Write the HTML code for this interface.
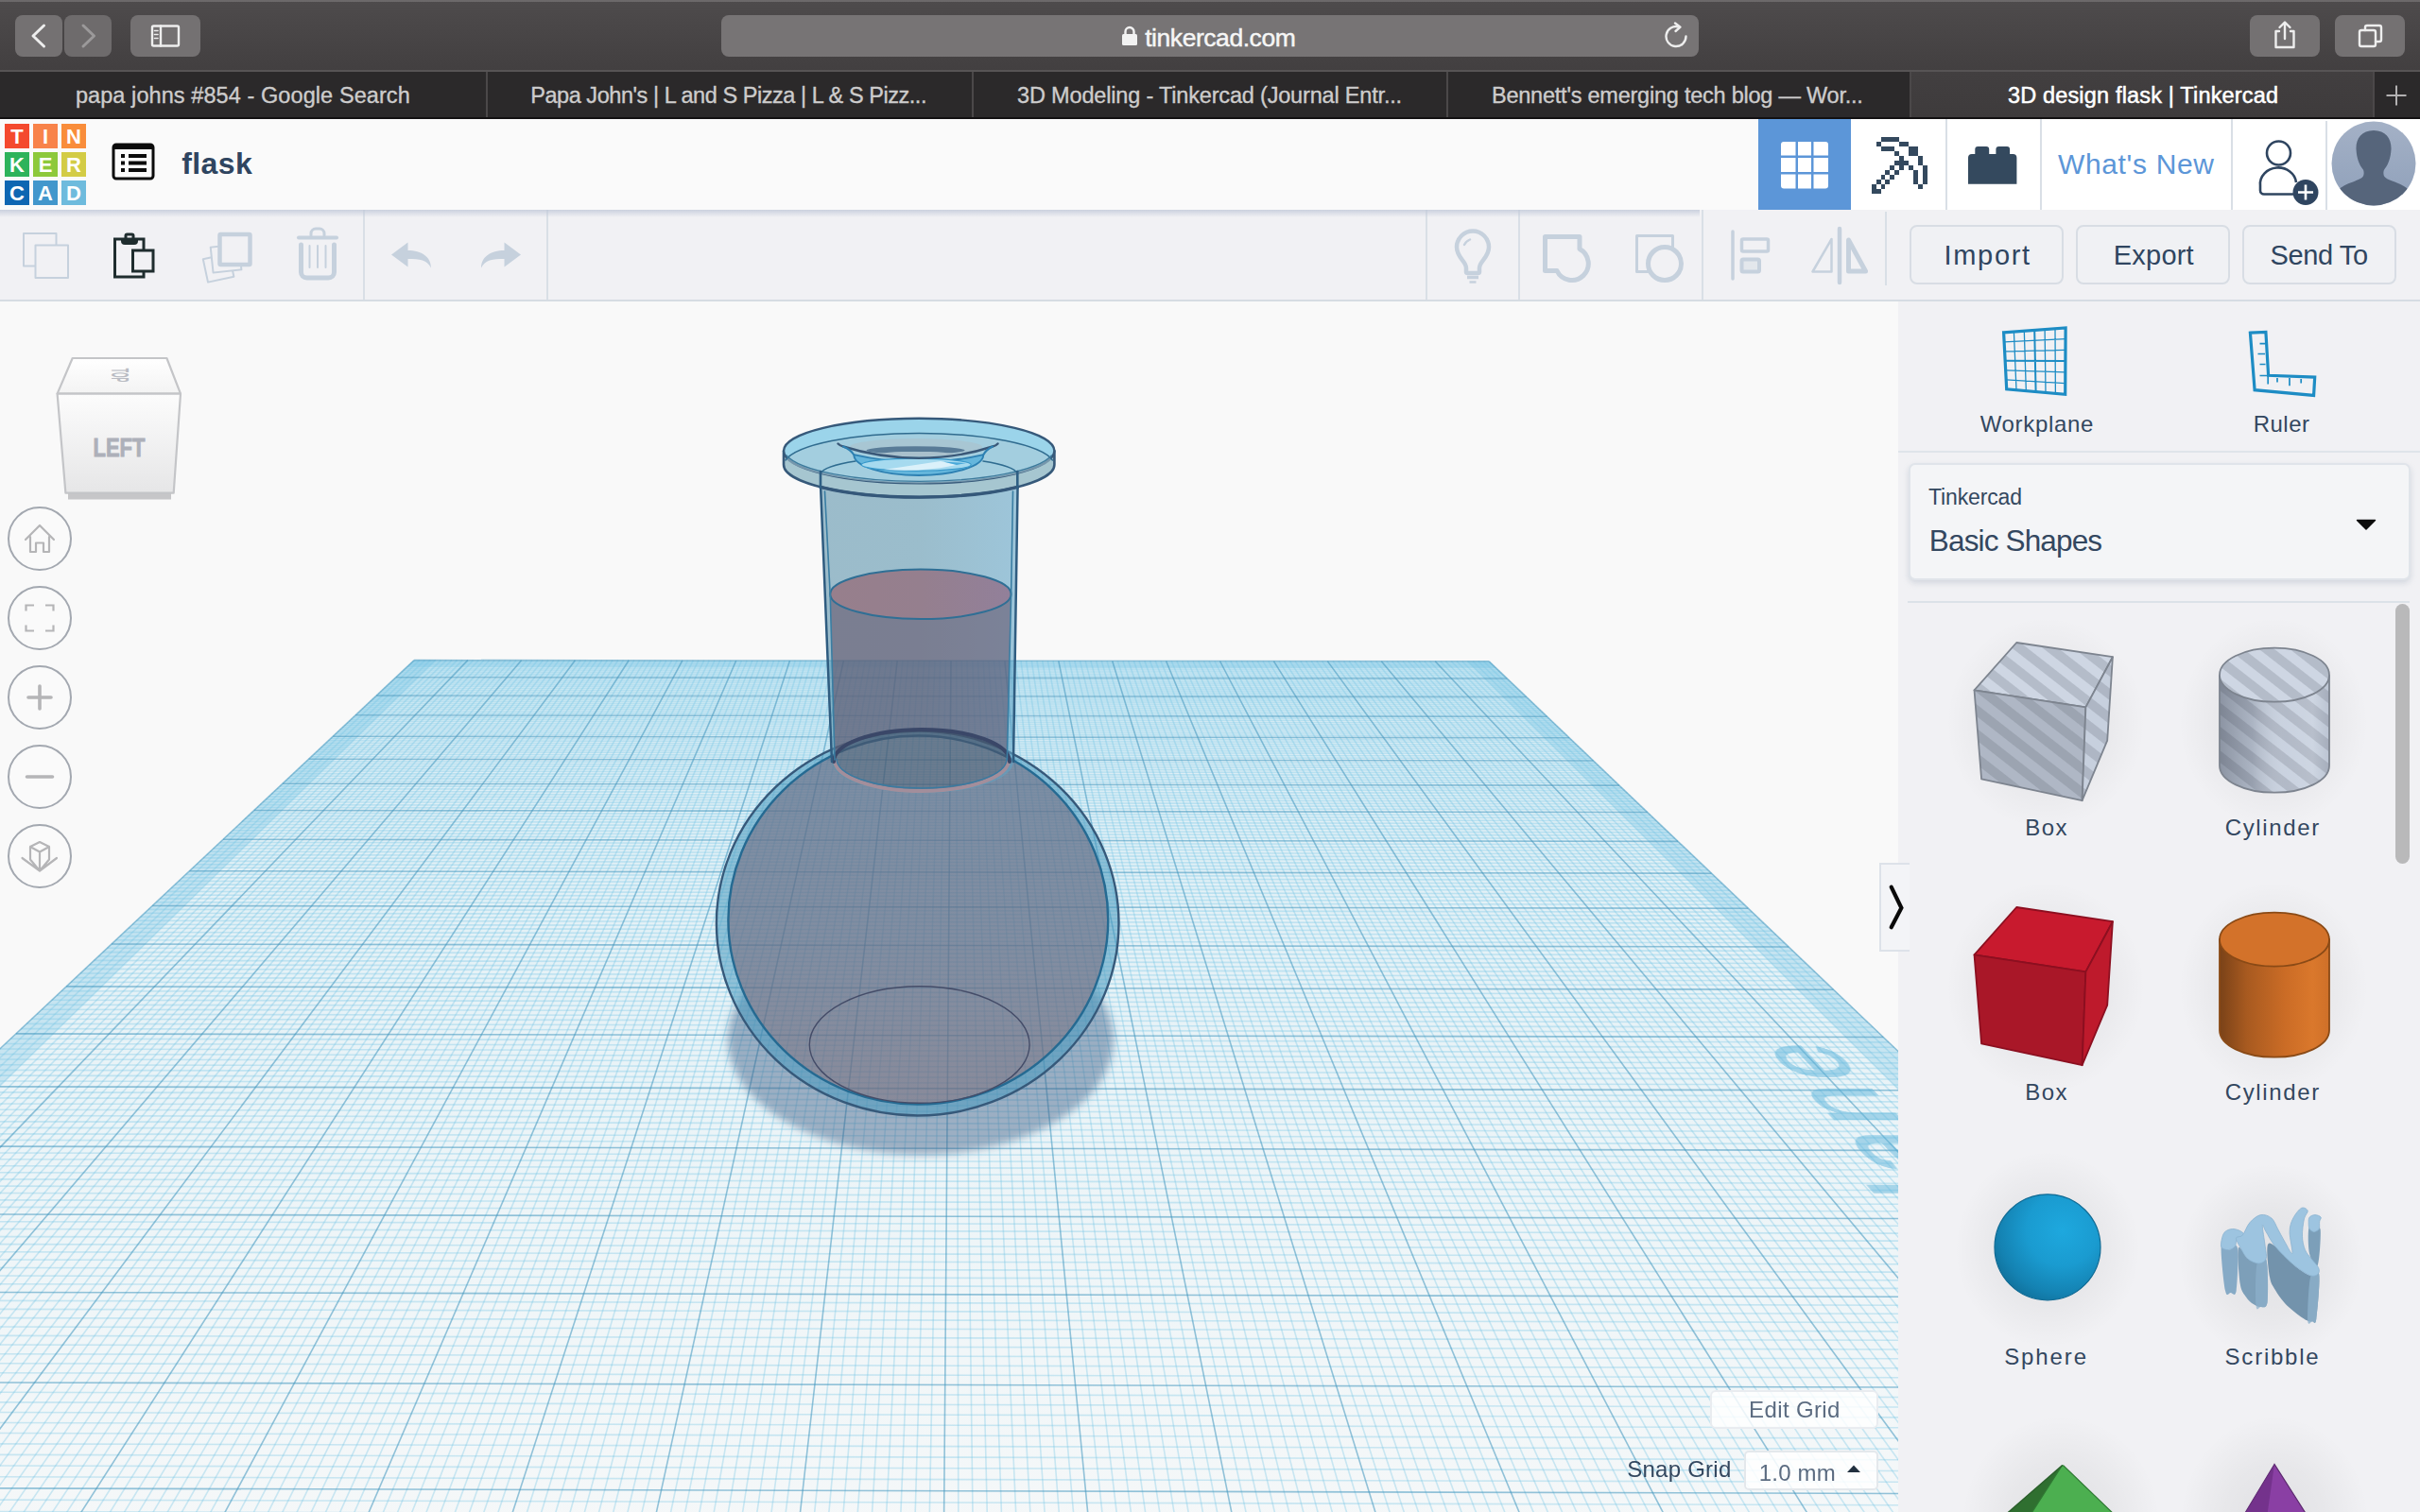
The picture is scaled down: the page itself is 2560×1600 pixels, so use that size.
<!DOCTYPE html>
<html lang="en">
<head>
<meta charset="utf-8">
<title>3D design flask | Tinkercad</title>
<style>
*{box-sizing:border-box;margin:0;padding:0}
html,body{width:2560px;height:1600px;overflow:hidden;background:#f9f9f9;font-family:"Liberation Sans",sans-serif;}
body{position:relative}
.abs{position:absolute}
.t{position:absolute;white-space:nowrap;line-height:1;}
svg{position:absolute;overflow:visible}
/* safari chrome */
#sf-top{left:0;top:0;width:2560px;height:76px;background:linear-gradient(#4e4b4c,#423f40);}
#sf-topline{left:0;top:0;width:2560px;height:2px;background:#6c696a}
.sfbtn{position:absolute;top:16px;height:44px;border-radius:8px;background:#747172;}
#sf-url{left:763px;top:16px;width:1034px;height:44px;border-radius:8px;background:#777475;}
#sf-tabs{left:0;top:74px;width:2560px;height:52px;background:#2b292a;border-top:2px solid #575455;border-bottom:2px solid #121011}
.tabsep{position:absolute;top:76px;width:2px;height:48px;background:#4b4849}
.tabt{position:absolute;top:88px;font-size:23.5px;color:#cdcccc;-webkit-text-stroke:0.35px #cdcccc;white-space:nowrap;line-height:26px;text-align:center}
/* tinkercad header */
#tk-head{left:0;top:126px;width:2560px;height:96px;background:#fafafa;}
#tk-tool{left:0;top:222px;width:2560px;height:97px;background:#f1f1f4;border-bottom:2px solid #d6dce3}
.vsep{position:absolute;width:2px;background:#d9dfe6}
.tbtn{position:absolute;top:238px;height:63px;width:163px;border:2px solid #d8dde4;border-radius:8px;background:#f0f1f4;}
.navy{color:#2f4560}
#panel{left:2008px;top:319px;width:552px;height:1281px;background:#f1f1f4}
.lbl{position:absolute;font-size:24px;color:#33475f;white-space:nowrap;line-height:1;letter-spacing:0.6px}
.navc{position:absolute;left:8px;width:68px;height:68px;border-radius:50%;border:2px solid #a3a8b0;background:#fafafa}
</style>
</head>
<body>
<!-- Safari chrome -->
<div class="abs" id="sf-top"></div>
<div class="abs" id="sf-topline"></div>
<div class="sfbtn" style="left:16px;width:50px"></div>
<div class="sfbtn" style="left:68px;width:50px;background:#6e6b6c"></div>
<div class="sfbtn" style="left:138px;width:74px"></div>
<div class="abs" id="sf-url"></div>
<div class="sfbtn" style="left:2380px;width:74px"></div>
<div class="sfbtn" style="left:2470px;width:74px"></div>
<svg width="2560" height="76" style="left:0;top:0" viewBox="0 0 2560 76" fill="none" stroke-linecap="round" stroke-linejoin="round">
  <path d="M46.5 27 L35 38 L46.5 49" stroke="#ededed" stroke-width="3"/>
  <path d="M88 27 L99.5 38 L88 49" stroke="#9b999a" stroke-width="3"/>
  <rect x="161" y="27.5" width="28" height="21" rx="1.5" stroke="#eeeeee" stroke-width="2.4"/>
  <path d="M170 27.5 V48.5" stroke="#eeeeee" stroke-width="2.4"/>
  <path d="M163.5 32.5 H167 M163.5 36.5 H167 M163.5 40.5 H167" stroke="#eeeeee" stroke-width="1.6"/>
  <!-- lock -->
  <rect x="1187" y="36" width="16" height="12" rx="1.5" fill="#f2f2f2" stroke="none"/>
  <path d="M1190.5 36 V33.5 a4.5 4.5 0 0 1 9 0 V36" stroke="#f2f2f2" stroke-width="2.4"/>
  <!-- reload -->
  <path d="M1783.5 38.5 a10.5 10.5 0 1 1 -7.5 -10" stroke="#eeeeee" stroke-width="2.4"/>
  <path d="M1772 24.5 L1777.5 28.6 L1772.5 33" stroke="#eeeeee" stroke-width="2.4"/>
  <!-- share -->
  <path d="M2411 33 H2407.5 V50 H2426.5 V33 H2423" stroke="#eeeeee" stroke-width="2.4"/>
  <path d="M2417 41 V24 M2411.5 29 L2417 23.5 L2422.5 29" stroke="#eeeeee" stroke-width="2.4"/>
  <!-- tabs -->
  <rect x="2496" y="32" width="17" height="17" rx="2" stroke="#eeeeee" stroke-width="2.4"/>
  <path d="M2502 32 V29 a2 2 0 0 1 2 -2 H2517 a2 2 0 0 1 2 2 V42 a2 2 0 0 1 -2 2 H2513" stroke="#eeeeee" stroke-width="2.4"/>
</svg>
<div class="t" id="urltxt" style="left:1211.2px;top:25px;font-size:26.5px;color:#f6f6f6;-webkit-text-stroke:0.45px #f6f6f6;line-height:30px;letter-spacing:-0.45px">tinkercad.com</div>
<div class="abs" id="sf-tabs"></div>
<div class="abs" style="left:2021px;top:76px;width:490px;height:48px;background:linear-gradient(#423f40,#3e3b3c)"></div>
<div class="tabsep" style="left:514px"></div>
<div class="tabsep" style="left:1028px"></div>
<div class="tabsep" style="left:1530px"></div>
<div class="tabsep" style="left:2020px"></div>
<div class="tabsep" style="left:2510px"></div>
<div class="tabt" id="tab1" style="left:79.9px;letter-spacing:0.08px">papa johns #854 - Google Search</div>
<div class="tabt" id="tab2" style="left:561.2px;letter-spacing:-0.45px">Papa John's | L and S Pizza | L &amp; S Pizz...</div>
<div class="tabt" id="tab3" style="left:1076.1px;letter-spacing:-0.18px">3D Modeling - Tinkercad (Journal Entr...</div>
<div class="tabt" id="tab4" style="left:1578px;letter-spacing:-0.23px">Bennett's emerging tech blog — Wor...</div>
<div class="tabt" id="tab5" style="left:2123.9px;color:#fff;-webkit-text-stroke:0.5px #fff;letter-spacing:0.17px">3D design flask | Tinkercad</div>
<svg width="50" height="46" style="left:2512px;top:78px" viewBox="0 0 50 46"><path d="M23 12.500 V33.500 M12.500 23 H33.500" stroke="#b3b1b2" stroke-width="2" fill="none"/></svg>
<!-- Tinkercad header -->
<div class="abs" id="tk-head"></div>
<div class="abs" style="left:1860px;top:126px;width:700px;height:98px;background:#ffffff"></div>
<div class="abs" style="left:1860px;top:126px;width:98px;height:96px;background:#5c96d8"></div>
<div class="vsep" style="left:2058px;top:126px;height:96px"></div>
<div class="vsep" style="left:2158px;top:126px;height:96px"></div>
<div class="vsep" style="left:2360px;top:126px;height:96px"></div>
<div class="vsep" style="left:2460px;top:128px;height:96px"></div>
<svg width="100" height="100" style="left:0;top:126px" viewBox="0 126 100 100">
  <g>
    <rect x="5" y="131" width="26" height="26" fill="#f4492e"/><rect x="35" y="131" width="26" height="26" fill="#f8834a"/><rect x="65" y="131" width="26" height="26" fill="#f98d3b"/>
    <rect x="5" y="161" width="26" height="26" fill="#2db35b"/><rect x="35" y="161" width="26" height="26" fill="#8dc93b"/><rect x="65" y="161" width="26" height="26" fill="#d3cc45"/>
    <rect x="5" y="191" width="26" height="26" fill="#0e66b2"/><rect x="35" y="191" width="26" height="26" fill="#4297cc"/><rect x="65" y="191" width="26" height="26" fill="#6ebbdd"/>
  </g>
  <g font-family="Liberation Sans, sans-serif" font-weight="bold" font-size="22" fill="#fff" text-anchor="middle">
    <text x="18" y="152">T</text><text x="48" y="152">I</text><text x="78" y="152">N</text>
    <text x="18" y="182">K</text><text x="48" y="182">E</text><text x="78" y="182">R</text>
    <text x="18" y="212">C</text><text x="48" y="212">A</text><text x="78" y="212">D</text>
  </g>
</svg>
<svg width="60" height="50" style="left:112px;top:146px" viewBox="112 146 60 50">
  <rect x="120" y="153" width="42" height="36" rx="3" fill="none" stroke="#0b0b0b" stroke-width="3"/>
  <path d="M120 153 H162 V158 H120Z" fill="#0b0b0b"/>
  <path d="M128 165 H132 M128 172.5 H132 M128 180 H132" stroke="#0b0b0b" stroke-width="4"/>
  <path d="M136 165 H155 M136 172.5 H155 M136 180 H155" stroke="#0b0b0b" stroke-width="4"/>
</svg>
<div class="t navy" id="title" style="left:192.2px;top:154px;font-size:32px;font-weight:bold;line-height:38px;color:#2f4560;letter-spacing:0.39px">flask</div>
<!-- grid icon -->
<svg width="98" height="96" style="left:1860px;top:126px" viewBox="1860 126 98 96">
  <path d="M1887 150 H1899.5 V164.5 H1884 V153 a3 3 0 0 1 3 -3Z M1902 150 H1916 V164.5 H1902Z M1918.500 150 H1931 a3 3 0 0 1 3 3 V164.5 H1918.500Z M1884 167 H1899.5 V182 H1884Z M1902 167 H1916 V182 H1902Z M1918.500 167 H1934 V182 H1918.500Z M1884 184.500 H1899.5 V199.500 H1887 a3 3 0 0 1 -3 -3Z M1902 184.500 H1916 V199.500 H1902Z M1918.500 184.500 H1934 V196.500 a3 3 0 0 1 -3 3 H1918.500Z" fill="#fff"/>
</svg>
<svg width="70" height="70" style="left:1975px;top:140px" viewBox="1975 140 70 70" shape-rendering="crispEdges"><path d="M1989.52 145.45h4.96v4.96h-4.96zM1994.48 145.45h4.96v4.96h-4.96zM1999.44 145.45h4.96v4.96h-4.96zM2004.40 145.45h4.96v4.96h-4.96zM1984.56 150.41h4.96v4.96h-4.96zM2009.36 150.41h4.96v4.96h-4.96zM2014.32 150.41h4.96v4.96h-4.96zM1989.52 155.37h4.96v4.96h-4.96zM1994.48 155.37h4.96v4.96h-4.96zM1999.44 155.37h4.96v4.96h-4.96zM2019.28 155.37h4.96v4.96h-4.96zM2024.24 155.37h4.96v4.96h-4.96zM2004.40 160.33h4.96v4.96h-4.96zM2019.28 160.33h4.96v4.96h-4.96zM2024.24 160.33h4.96v4.96h-4.96zM2009.36 165.29h4.96v4.96h-4.96zM2029.20 165.29h4.96v4.96h-4.96zM2004.40 170.25h4.96v4.96h-4.96zM2009.36 170.25h4.96v4.96h-4.96zM2014.32 170.25h4.96v4.96h-4.96zM2029.20 170.25h4.96v4.96h-4.96zM1999.44 175.21h4.96v4.96h-4.96zM2009.36 175.21h4.96v4.96h-4.96zM2019.28 175.21h4.96v4.96h-4.96zM2034.16 175.21h4.96v4.96h-4.96zM1994.48 180.17h4.96v4.96h-4.96zM2004.40 180.17h4.96v4.96h-4.96zM2024.24 180.17h4.96v4.96h-4.96zM2034.16 180.17h4.96v4.96h-4.96zM1989.52 185.13h4.96v4.96h-4.96zM1999.44 185.13h4.96v4.96h-4.96zM2024.24 185.13h4.96v4.96h-4.96zM2034.16 185.13h4.96v4.96h-4.96zM1984.56 190.09h4.96v4.96h-4.96zM1994.48 190.09h4.96v4.96h-4.96zM2024.24 190.09h4.96v4.96h-4.96zM2034.16 190.09h4.96v4.96h-4.96zM1979.60 195.05h4.96v4.96h-4.96zM1989.52 195.05h4.96v4.96h-4.96zM2029.20 195.05h4.96v4.96h-4.96zM1979.60 200.01h4.96v4.96h-4.96zM1984.56 200.01h4.96v4.96h-4.96z" fill="#34495e"/></svg>
<svg width="60" height="44" style="left:2080px;top:153px" viewBox="2080 153 60 44">
  <path d="M2082 167 a4 4 0 0 1 4 -4 H2089.300 V158 a3 3 0 0 1 3 -3 H2101.200 a3 3 0 0 1 3 3 V163 H2111.400 V158 a3 3 0 0 1 3 -3 H2123.100 a3 3 0 0 1 3 3 V163 H2129.400 a4 4 0 0 1 4 4 V194.700 H2082Z" fill="#34495e"/>
</svg>
<div class="t" id="whatsnew" style="left:2176.9px;top:157px;font-size:30px;color:#5c96d8;line-height:34px;letter-spacing:0.67px">What's New</div>
<!-- user add -->
<svg width="100" height="96" style="left:2361px;top:126px" viewBox="2361 126 100 96" fill="none">
  <circle cx="2410.5" cy="162" r="12.5" stroke="#2f4560" stroke-width="2.600"/>
  <path d="M2427 205.500 H2395 a4 4 0 0 1 -4 -4 V196 a19 17 0 0 1 38 -3" stroke="#2f4560" stroke-width="2.600"/>
  <circle cx="2439" cy="203.500" r="13.500" fill="#2f4560"/>
  <path d="M2439 195.500 V211.500 M2431 203.500 H2447" stroke="#fff" stroke-width="2.600"/>
</svg>
<!-- avatar -->
<svg width="92" height="92" style="left:2465px;top:127px" viewBox="2465 127 92 92">
  <defs>
    <linearGradient id="avg" x1="0" y1="0" x2="0" y2="1"><stop offset="0" stop-color="#a4b1c6"/><stop offset="1" stop-color="#8fa0ba"/></linearGradient>
    <clipPath id="avc"><circle cx="2511" cy="173" r="44.500"/></clipPath>
  </defs>
  <circle cx="2511" cy="173" r="44.500" fill="url(#avg)"/>
  <g clip-path="url(#avc)">
    <path d="M2511 138 c-13 0 -19 9 -18.500 20 c0.500 9 3 16 7 21 c1.500 2 1.500 6 0 8 c-4 5 -22 7 -27 16 c-3 6 -3 12 -3 20 h83 c0 -8 0 -14 -3 -20 c-5 -9 -23 -11 -27 -16 c-1.500 -2 -1.500 -6 0 -8 c4 -5 6.500 -12 7 -21 c0.500 -11 -5.500 -20 -18.500 -20z" fill="#56657b"/>
  </g>
</svg>
<!-- Tinkercad toolbar -->
<div class="abs" id="tk-tool"></div>
<div class="vsep" style="left:384px;top:222px;height:95px"></div>
<div class="vsep" style="left:578px;top:222px;height:95px"></div>
<div class="vsep" style="left:1508px;top:222px;height:95px"></div>
<div class="vsep" style="left:1606px;top:222px;height:95px"></div>
<div class="vsep" style="left:1800px;top:222px;height:95px"></div>
<div class="vsep" style="left:1994px;top:224px;height:78px"></div>
<svg width="2010" height="97" style="left:0;top:222px" viewBox="0 222 2010 97" fill="none" stroke-linejoin="round" stroke-linecap="round">
  <!-- copy -->
  <g stroke="#c6d1dd" stroke-width="2">
    <rect x="25" y="247" width="34.500" height="34.500" fill="#f1f1f4"/>
    <rect x="37.500" y="259.500" width="34.500" height="34.500" fill="#f1f1f4"/>
  </g>
  <!-- paste -->
  <g stroke="#1f2d2e" stroke-width="3" stroke-linejoin="miter">
    <rect x="121.500" y="253" width="30.500" height="40"/>
    <rect x="140.500" y="265" width="21.500" height="22" fill="#f1f1f4"/>
  </g>
  <path d="M128 253 h18 v2 a4 4 0 0 1 -4 4 h-10 a4 4 0 0 1 -4 -4z" fill="#1f2d2e"/>
  <path d="M133 252 v-2.500 a1.500 1.500 0 0 1 1.500 -1.500 h5 a1.500 1.500 0 0 1 1.500 1.500 v2.500" stroke="#1f2d2e" stroke-width="3"/>
  <!-- duplicate -->
  <g stroke="#c6d1dd">
    <rect x="217" y="271" width="28" height="25" transform="rotate(-12 231 283)" stroke-width="2" fill="#f1f1f4"/>
    <rect x="224" y="260" width="30" height="27" transform="rotate(-6 239 273)" stroke-width="2" fill="#f1f1f4"/>
    <rect x="232.500" y="248" width="32" height="32" rx="1" stroke-width="4.500" fill="#f1f1f4"/>
  </g>
  <!-- trash -->
  <g stroke="#c6d1dd">
    <path d="M316 251.500 H356" stroke-width="4"/>
    <path d="M329 249 v-2 a5 5 0 0 1 5 -5 h4 a5 5 0 0 1 5 5 v2" stroke-width="3"/>
    <path d="M318.500 259 V288 a6 6 0 0 0 6 6 H347.500 a6 6 0 0 0 6 -6 V259" stroke-width="5"/>
    <path d="M327.500 260 V283 M336 260 V283 M344.500 260 V283" stroke-width="2"/>
  </g>
  <!-- undo / redo -->
  <path d="M414 269.500 L431.500 256.500 V265 C446 265 456 272 456 283.500 C452 275 444 274 431.500 274 V282.500Z" fill="#c6d1dd"/>
  <path d="M551 269.500 L533.500 256.500 V265 C519 265 509 272 509 283.500 C513 275 521 274 533.500 274 V282.500Z" fill="#c6d1dd"/>
  <!-- bulb -->
  <g stroke="#c6d1dd">
    <path d="M1551 287.500 v-4 c0 -7 -10 -11 -10 -22 a17 17 0 0 1 34 0 c0 11 -10 15 -10 22 v4 a1.500 1.500 0 0 1 -1.500 1.500 h-11 a1.500 1.500 0 0 1 -1.500 -1.500z" stroke-width="4.500"/>
    <path d="M1552 293.500 h12" stroke-width="3.500" stroke-linecap="butt"/>
    <path d="M1554.500 298.500 h7" stroke-width="2.500" stroke-linecap="butt"/>
    <path d="M1549 259 q2 -4 6 -5.500" stroke-width="2.400"/>
  </g>
  <!-- group -->
  <path d="M1634.500 250.500 H1671 V263.500 A17.500 17.500 0 1 1 1647 286.500 H1634.500Z" stroke="#c6d1dd" stroke-width="5"/>
  <!-- ungroup -->
  <rect x="1731.500" y="249.500" width="38" height="38" stroke="#c6d1dd" stroke-width="3"/>
  <circle cx="1761" cy="279" r="17.500" stroke="#c6d1dd" stroke-width="5" fill="#f1f1f4"/>
  <!-- align -->
  <g stroke="#c6d1dd">
    <path d="M1833 245 V295" stroke-width="3.500"/>
    <rect x="1842.500" y="253" width="28" height="13" rx="1.500" stroke-width="3.500"/>
    <rect x="1842.500" y="274.500" width="18.500" height="13" rx="1.500" stroke-width="4" fill="#e3e7ec"/>
  </g>
  <!-- mirror -->
  <g stroke="#c6d1dd">
    <path d="M1946 242 V299" stroke-width="4.500"/>
    <path d="M1937.500 253 L1917.500 287.500 H1937.500Z" stroke-width="2.500"/>
    <path d="M1955.500 254 V287 H1973.500Z" stroke-width="5"/>
  </g>
</svg>
<div class="tbtn" style="left:2020px"></div>
<div class="tbtn" style="left:2196px"></div>
<div class="tbtn" style="left:2372px"></div>
<div class="t navy" id="b-import" style="left:2056.4px;top:252px;font-size:29px;line-height:36px;letter-spacing:1.72px">Import</div>
<div class="t navy" id="b-export" style="left:2235.8px;top:252px;font-size:29px;line-height:36px;letter-spacing:0.21px">Export</div>
<div class="t navy" id="b-sendto" style="left:2401.5px;top:252px;font-size:29px;line-height:36px;letter-spacing:-0.38px">Send To</div>
<div class="abs" style="left:0;top:222px;width:1798px;height:8px;background:linear-gradient(rgba(190,198,215,0.75),rgba(190,198,215,0))"></div>
<!-- 3D canvas -->
<svg id="scene" width="2008" height="1281" style="left:0;top:319px;overflow:hidden" viewBox="0 319 2008 1281">
  <defs>
    <linearGradient id="planeg" gradientUnits="userSpaceOnUse" x1="0" y1="699" x2="0" y2="1600">
      <stop offset="0" stop-color="#7fcbea" stop-opacity="0.26"/>
      <stop offset="0.25" stop-color="#86ceeb" stop-opacity="0.20"/>
      <stop offset="0.6" stop-color="#8fd2ec" stop-opacity="0.12"/>
      <stop offset="1" stop-color="#9dd8ee" stop-opacity="0.05"/>
    </linearGradient>
    <filter id="blur14" x="-30%" y="-30%" width="160%" height="160%"><feGaussianBlur stdDeviation="13"/></filter>
    <filter id="blur2" x="-10%" y="-10%" width="120%" height="120%"><feGaussianBlur stdDeviation="1.2"/></filter>
    <linearGradient id="sphg" gradientUnits="userSpaceOnUse" x1="0" y1="780" x2="0" y2="1170">
      <stop offset="0" stop-color="#5d6d88" stop-opacity="0.74"/>
      <stop offset="0.55" stop-color="#606c85" stop-opacity="0.75"/>
      <stop offset="1" stop-color="#6a697d" stop-opacity="0.76"/>
    </linearGradient>
    <filter id="blur6" x="-20%" y="-20%" width="140%" height="140%"><feGaussianBlur stdDeviation="4.5"/></filter>
    <linearGradient id="neckg" gradientUnits="userSpaceOnUse" x1="867" y1="0" x2="1077" y2="0">
      <stop offset="0" stop-color="#5d93ab"/><stop offset="0.5" stop-color="#5c95ae"/><stop offset="1" stop-color="#60a3c5"/>
    </linearGradient>
    <linearGradient id="liqtop" gradientUnits="userSpaceOnUse" x1="878" y1="0" x2="1070" y2="0">
      <stop offset="0" stop-color="#977f8c"/><stop offset="0.5" stop-color="#957f8e"/><stop offset="1" stop-color="#92809a"/>
    </linearGradient>
    <clipPath id="notjunc"><path clip-rule="evenodd" d="M0 300 H2008 V1600 H0Z M883 804 A92 33 0 1 0 1067 804 A92 33 0 1 0 883 804Z"/></clipPath>
    <clipPath id="notsphere"><path clip-rule="evenodd" d="M0 300 H2008 V1600 H0Z M770.4 973.5 A200.9 195 0 1 0 1172.2 973.5 A200.9 195 0 1 0 770.4 973.5Z"/></clipPath>
    <clipPath id="belowplane"><rect x="0" y="699" width="2008" height="901"/></clipPath>
  </defs>
  <g>
<polygon points="438.1,698.6 1575.2,699.8 2567.3,1645.8 -561.5,1636.7" fill="url(#planeg)"/>
<polygon points="438.1,698.6 -561.5,1636.7 -499.3,1636.9 460.8,698.6" fill="#5fb6dc" fill-opacity="0.24"/>
<polygon points="1575.2,699.8 2567.3,1645.8 2504.4,1645.6 1552.4,699.8" fill="#5fb6dc" fill-opacity="0.24"/>
<polygon points="438.1,698.6 1575.2,699.8 1582.7,707 430.6,705.7" fill="#5fb6dc" fill-opacity="0.24"/>
<path d="M443.8 698.6L-545.9 1636.8M449.5 698.6L-530.4 1636.8M455.2 698.6L-514.8 1636.8M460.8 698.6L-499.3 1636.9M466.5 698.6L-483.7 1636.9M472.2 698.6L-468.1 1637M477.9 698.6L-452.6 1637M483.5 698.6L-437 1637.1M489.2 698.6L-421.5 1637.1M500.6 698.6L-390.4 1637.2M506.2 698.7L-374.8 1637.2M511.9 698.7L-359.2 1637.3M517.6 698.7L-343.7 1637.3M523.3 698.7L-328.1 1637.4M528.9 698.7L-312.5 1637.4M534.6 698.7L-297 1637.5M540.3 698.7L-281.4 1637.5M546 698.7L-265.8 1637.6M557.3 698.7L-234.7 1637.7M563 698.7L-219.1 1637.7M568.7 698.7L-203.6 1637.7M574.3 698.7L-188 1637.8M580 698.7L-172.4 1637.8M585.7 698.7L-156.8 1637.9M591.4 698.7L-141.3 1637.9M597 698.8L-125.7 1638M602.7 698.8L-110.1 1638M614.1 698.8L-78.9 1638.1M619.7 698.8L-63.4 1638.1M625.4 698.8L-47.8 1638.2M631.1 698.8L-32.2 1638.2M636.8 698.8L-16.6 1638.3M642.4 698.8L-1 1638.3M648.1 698.8L14.5 1638.4M653.8 698.8L30.1 1638.4M659.5 698.8L45.7 1638.5M670.8 698.8L76.9 1638.6M676.5 698.8L92.5 1638.6M682.2 698.8L108.1 1638.6M687.9 698.9L123.7 1638.7M693.5 698.9L139.3 1638.7M699.2 698.9L154.8 1638.8M704.9 698.9L170.4 1638.8M710.6 698.9L186 1638.9M716.3 698.9L201.6 1638.9M727.6 698.9L232.8 1639M733.3 698.9L248.4 1639.1M739 698.9L264 1639.1M744.7 698.9L279.6 1639.1M750.3 698.9L295.2 1639.2M756 698.9L310.8 1639.2M761.7 698.9L326.4 1639.3M767.4 698.9L342 1639.3M773.1 698.9L357.6 1639.4M784.4 699L388.9 1639.5M790.1 699L404.5 1639.5M795.8 699L420.1 1639.5M801.5 699L435.7 1639.6M807.1 699L451.3 1639.6M812.8 699L466.9 1639.7M818.5 699L482.5 1639.7M824.2 699L498.1 1639.8M829.9 699L513.7 1639.8M841.2 699L545 1639.9M846.9 699L560.6 1640M852.6 699L576.2 1640M858.3 699L591.8 1640M864 699L607.5 1640.1M869.6 699.1L623.1 1640.1M875.3 699.1L638.7 1640.2M881 699.1L654.3 1640.2M886.7 699.1L669.9 1640.3M898 699.1L701.2 1640.4M903.7 699.1L716.8 1640.4M909.4 699.1L732.4 1640.5M915.1 699.1L748.1 1640.5M920.8 699.1L763.7 1640.5M926.5 699.1L779.3 1640.6M932.1 699.1L795 1640.6M937.8 699.1L810.6 1640.7M943.5 699.1L826.2 1640.7M954.9 699.1L857.5 1640.8M960.6 699.2L873.1 1640.9M966.3 699.2L888.8 1640.9M971.9 699.2L904.4 1641M977.6 699.2L920.1 1641M983.3 699.2L935.7 1641M989 699.2L951.3 1641.1M994.7 699.2L967 1641.1M1000.4 699.2L982.6 1641.2M1011.7 699.2L1013.9 1641.3M1017.4 699.2L1029.5 1641.3M1023.1 699.2L1045.2 1641.4M1028.8 699.2L1060.8 1641.4M1034.5 699.2L1076.5 1641.4M1040.2 699.2L1092.1 1641.5M1045.8 699.2L1107.8 1641.5M1051.5 699.3L1123.4 1641.6M1057.2 699.3L1139.1 1641.6M1068.6 699.3L1170.4 1641.7M1074.3 699.3L1186.1 1641.8M1080 699.3L1201.7 1641.8M1085.6 699.3L1217.4 1641.9M1091.3 699.3L1233 1641.9M1097 699.3L1248.7 1641.9M1102.7 699.3L1264.3 1642M1108.4 699.3L1280 1642M1114.1 699.3L1295.7 1642.1M1125.5 699.3L1327 1642.2M1131.1 699.3L1342.6 1642.2M1136.8 699.3L1358.3 1642.3M1142.5 699.4L1374 1642.3M1148.2 699.4L1389.6 1642.4M1153.9 699.4L1405.3 1642.4M1159.6 699.4L1421 1642.4M1165.3 699.4L1436.7 1642.5M1171 699.4L1452.3 1642.5M1182.3 699.4L1483.7 1642.6M1188 699.4L1499.3 1642.7M1193.7 699.4L1515 1642.7M1199.4 699.4L1530.7 1642.8M1205.1 699.4L1546.4 1642.8M1210.8 699.4L1562 1642.9M1216.5 699.4L1577.7 1642.9M1222.2 699.4L1593.4 1642.9M1227.9 699.4L1609.1 1643M1239.2 699.5L1640.4 1643.1M1244.9 699.5L1656.1 1643.1M1250.6 699.5L1671.8 1643.2M1256.3 699.5L1687.5 1643.2M1262 699.5L1703.2 1643.3M1267.7 699.5L1718.9 1643.3M1273.4 699.5L1734.6 1643.4M1279.1 699.5L1750.2 1643.4M1284.8 699.5L1765.9 1643.4M1296.1 699.5L1797.3 1643.5M1301.8 699.5L1813 1643.6M1307.5 699.5L1828.7 1643.6M1313.2 699.5L1844.4 1643.7M1318.9 699.5L1860.1 1643.7M1324.6 699.6L1875.8 1643.8M1330.3 699.6L1891.5 1643.8M1336 699.6L1907.2 1643.9M1341.7 699.6L1922.9 1643.9M1353.1 699.6L1954.3 1644M1358.8 699.6L1970 1644M1364.5 699.6L1985.7 1644.1M1370.1 699.6L2001.4 1644.1M1375.8 699.6L2017.1 1644.2M1381.5 699.6L2032.8 1644.2M1387.2 699.6L2048.5 1644.3M1392.9 699.6L2064.2 1644.3M1398.6 699.6L2079.9 1644.4M1410 699.6L2111.3 1644.4M1415.7 699.6L2127 1644.5M1421.4 699.7L2142.8 1644.5M1427.1 699.7L2158.5 1644.6M1432.8 699.7L2174.2 1644.6M1438.5 699.7L2189.9 1644.7M1444.2 699.7L2205.6 1644.7M1449.9 699.7L2221.3 1644.8M1455.6 699.7L2237 1644.8M1466.9 699.7L2268.5 1644.9M1472.6 699.7L2284.2 1644.9M1478.3 699.7L2299.9 1645M1484 699.7L2315.6 1645M1489.7 699.7L2331.4 1645.1M1495.4 699.7L2347.1 1645.1M1501.1 699.7L2362.8 1645.2M1506.8 699.7L2378.5 1645.2M1512.5 699.8L2394.3 1645.3M1523.9 699.8L2425.7 1645.4M1529.6 699.8L2441.5 1645.4M1535.3 699.8L2457.2 1645.4M1541 699.8L2472.9 1645.5M1546.7 699.8L2488.7 1645.5M1552.4 699.8L2504.4 1645.6M1558.1 699.8L2520.1 1645.6M1563.8 699.8L2535.9 1645.7M1569.5 699.8L2551.6 1645.7" stroke="#72c3e6" stroke-opacity="0.34" stroke-width="1.6" fill="none"/>
<path d="M436.3 700.3L1577 701.6M434.4 702.1L1578.9 703.4M432.5 703.9L1580.8 705.2M430.6 705.7L1582.7 707M428.7 707.5L1584.6 708.8M426.7 709.3L1586.5 710.6M424.8 711.1L1588.4 712.4M422.8 713L1590.3 714.3M420.8 714.8L1592.3 716.1M416.9 718.6L1596.2 719.9M414.8 720.5L1598.2 721.8M412.8 722.4L1600.2 723.7M410.8 724.3L1602.3 725.6M408.7 726.2L1604.3 727.6M406.6 728.1L1606.3 729.5M404.6 730.1L1608.4 731.5M402.5 732.1L1610.5 733.5M400.3 734.1L1612.6 735.5M396.1 738.1L1616.8 739.5M393.9 740.1L1618.9 741.5M391.7 742.1L1621.1 743.6M389.5 744.2L1623.2 745.6M387.3 746.3L1625.4 747.7M385.1 748.3L1627.6 749.8M382.9 750.4L1629.8 751.9M380.6 752.6L1632.1 754.1M378.4 754.7L1634.3 756.2M373.8 759L1638.8 760.5M371.5 761.2L1641.1 762.7M369.1 763.4L1643.4 764.9M366.8 765.6L1645.8 767.1M364.4 767.8L1648.1 769.4M362 770L1650.5 771.6M359.6 772.3L1652.9 773.9M357.2 774.6L1655.3 776.2M354.7 776.8L1657.7 778.5M349.8 781.5L1662.6 783.1M347.3 783.8L1665 785.5M344.8 786.2L1667.5 787.9M342.3 788.6L1670 790.2M339.7 791L1672.5 792.7M337.1 793.4L1675.1 795.1M334.5 795.8L1677.7 797.5M331.9 798.3L1680.2 800M329.3 800.7L1682.8 802.5M324 805.7L1688.1 807.5M321.3 808.3L1690.8 810.1M318.6 810.8L1693.5 812.6M315.8 813.4L1696.2 815.2M313.1 816L1698.9 817.8M310.3 818.6L1701.7 820.4M307.5 821.2L1704.5 823.1M304.6 823.9L1707.3 825.7M301.8 826.5L1710.1 828.4M296 832L1715.8 833.9M293.1 834.7L1718.7 836.6M290.2 837.5L1721.6 839.4M287.2 840.3L1724.5 842.2M284.2 843.1L1727.5 845M281.2 845.9L1730.5 847.9M278.1 848.7L1733.5 850.8M275.1 851.6L1736.5 853.7M272 854.5L1739.6 856.6M265.7 860.4L1745.8 862.5M262.5 863.4L1748.9 865.5M259.3 866.4L1752.1 868.5M256.1 869.4L1755.3 871.6M252.8 872.5L1758.5 874.6M249.6 875.6L1761.8 877.7M246.2 878.7L1765.1 880.9M242.9 881.8L1768.4 884M239.5 885L1771.7 887.2M232.7 891.4L1778.5 893.7M229.2 894.6L1781.9 896.9M225.7 897.9L1785.4 900.2M222.2 901.2L1788.9 903.6M218.7 904.6L1792.4 906.9M215.1 907.9L1795.9 910.3M211.4 911.3L1799.5 913.7M207.8 914.8L1803.1 917.2M204.1 918.2L1806.8 920.7M196.6 925.2L1814.2 927.7M192.8 928.8L1818 931.3M189 932.4L1821.8 934.9M185.1 936L1825.6 938.6M181.2 939.7L1829.4 942.2M177.3 943.4L1833.3 946M173.3 947.1L1837.3 949.7M169.3 950.9L1841.3 953.5M165.3 954.7L1845.3 957.3M157.1 962.4L1853.4 965.1M152.9 966.3L1857.5 969M148.7 970.2L1861.7 973M144.4 974.2L1865.9 977M140.1 978.3L1870.2 981.1M135.8 982.3L1874.5 985.2M131.4 986.5L1878.8 989.3M127 990.6L1883.2 993.5M122.5 994.8L1887.6 997.7M113.4 1003.3L1896.6 1006.3M108.8 1007.6L1901.2 1010.7M104.2 1012L1905.8 1015.1M99.5 1016.4L1910.5 1019.5M94.7 1020.9L1915.2 1024M89.9 1025.4L1920 1028.5M85.1 1030L1924.8 1033.1M80.1 1034.6L1929.6 1037.8M75.2 1039.2L1934.6 1042.5M65.1 1048.7L1944.5 1052M60 1053.5L1949.6 1056.8M54.8 1058.3L1954.8 1061.7M49.6 1063.2L1959.9 1066.7M44.3 1068.2L1965.2 1071.7M38.9 1073.2L1970.5 1076.7M33.5 1078.3L1975.9 1081.8M28.1 1083.4L1981.3 1087M22.5 1088.6L1986.8 1092.2M11.3 1099.2L1997.9 1102.9M5.6 1104.5L2003.6 1108.3M-0.2 1110L2009.3 1113.8M-6.1 1115.5L2015.1 1119.3M-12 1121L2021 1124.9M-18 1126.7L2027 1130.6M-24 1132.3L2033 1136.3M-30.2 1138.1L2039.1 1142.1M-36.4 1143.9L2045.2 1148M-49 1155.8L2057.8 1159.9M-55.5 1161.8L2064.2 1166M-62 1167.9L2070.6 1172.2M-68.6 1174.1L2077.2 1178.4M-75.2 1180.4L2083.8 1184.8M-82 1186.7L2090.5 1191.1M-88.8 1193.2L2097.3 1197.6M-95.8 1199.7L2104.2 1204.2M-102.8 1206.2L2111.1 1210.8M-117.1 1219.7L2125.3 1224.4M-124.4 1226.5L2132.6 1231.3M-131.8 1233.4L2139.9 1238.3M-139.3 1240.5L2147.4 1245.3M-146.8 1247.6L2154.9 1252.5M-154.5 1254.8L2162.5 1259.8M-162.3 1262.1L2170.2 1267.2M-170.2 1269.5L2178.1 1274.6M-178.2 1277L2186 1282.2M-194.5 1292.3L2202.2 1297.7M-202.8 1300.1L2210.5 1305.6M-211.3 1308.1L2218.9 1313.6M-219.9 1316.1L2227.4 1321.7M-228.5 1324.3L2236.1 1329.9M-237.4 1332.5L2244.8 1338.3M-246.3 1340.9L2253.7 1346.7M-255.4 1349.4L2262.7 1355.3M-264.6 1358.1L2271.8 1364M-283.4 1375.7L2290.5 1381.9M-293 1384.7L2300.1 1391M-302.7 1393.9L2309.8 1400.2M-312.6 1403.2L2319.6 1409.6M-322.7 1412.6L2329.6 1419.1M-332.9 1422.2L2339.8 1428.8M-343.2 1431.9L2350.1 1438.6M-353.7 1441.8L2360.5 1448.6M-364.4 1451.8L2371.2 1458.7M-386.3 1472.3L2392.9 1479.5M-397.5 1482.8L2404.1 1490.1M-408.9 1493.5L2415.4 1500.9M-420.5 1504.4L2426.9 1511.9M-432.3 1515.4L2438.7 1523.1M-444.2 1526.7L2450.6 1534.4M-456.4 1538.1L2462.7 1546M-468.7 1549.7L2475 1557.7M-481.3 1561.5L2487.5 1569.6M-507.1 1585.7L2513.2 1594.1M-520.3 1598.1L2526.4 1606.7M-533.8 1610.7L2539.8 1619.5M-547.5 1623.6L2553.4 1632.5M-561.5 1636.7L2567.3 1645.8" stroke="#72c3e6" stroke-opacity="0.34" stroke-width="1.6" fill="none"/>
<path d="M438.1 698.6L-561.5 1636.7M494.9 698.6L-405.9 1637.2M551.6 698.7L-250.3 1637.6M608.4 698.8L-94.5 1638.1M665.2 698.8L61.3 1638.5M721.9 698.9L217.2 1639M778.7 699L373.3 1639.4M835.5 699L529.4 1639.9M892.4 699.1L685.6 1640.3M949.2 699.1L841.9 1640.8M1006 699.2L998.3 1641.2M1062.9 699.3L1154.7 1641.7M1119.8 699.3L1311.3 1642.1M1176.7 699.4L1468 1642.6M1233.6 699.5L1624.8 1643M1290.5 699.5L1781.6 1643.5M1347.4 699.6L1938.6 1643.9M1404.3 699.6L2095.6 1644.4M1461.3 699.7L2252.8 1644.9M1518.2 699.8L2410 1645.3M1575.2 699.8L2567.3 1645.8" stroke="#3f95bd" stroke-opacity="0.55" stroke-width="1.6" fill="none"/>
<path d="M438.1 698.6L1575.2 699.8M418.9 716.7L1594.3 718M398.2 736.1L1614.7 737.5M376.1 756.8L1636.6 758.3M352.3 779.2L1660.1 780.8M326.6 803.2L1685.5 805M298.9 829.2L1712.9 831.1M268.8 857.5L1742.7 859.5M236.1 888.2L1775.1 890.4M200.4 921.7L1810.5 924.2M161.2 958.5L1849.3 961.2M118 999L1892.1 1002M70.2 1043.9L1939.5 1047.2M16.9 1093.9L1992.3 1097.5M-42.7 1149.8L2051.5 1153.9M-109.9 1212.9L2118.2 1217.6M-186.3 1284.6L2194.1 1289.9M-273.9 1366.8L2281.1 1372.9M-375.3 1462L2382 1469M-494.1 1573.5L2500.2 1581.8" stroke="#3f95bd" stroke-opacity="0.55" stroke-width="1.6" fill="none"/>
  <!--WPTEXT-->
  </g>
  <!-- shadow -->
  <g clip-path="url(#notsphere)"><ellipse cx="974" cy="1100" rx="204" ry="122" fill="#3c5a82" fill-opacity="0.45" filter="url(#blur6)"/></g>
    <g id="flask" stroke-linejoin="round" stroke-linecap="round">
    <!-- sphere -->
    <path fill-rule="evenodd" d="M757.9 977 A212.8 203.5 0 1 0 1183.5 977 A212.8 203.5 0 1 0 757.9 977Z M770.4 973.5 A200.9 195 0 1 1 1172.2 973.5 A200.9 195 0 1 1 770.4 973.5Z" fill="#4c9bbe" fill-opacity="0.56"/>
    <ellipse cx="971.3" cy="973.5" rx="200.9" ry="195" fill="url(#sphg)" clip-path="url(#notjunc)"/>
    <ellipse cx="971.3" cy="973.5" rx="200.9" ry="195" fill="none" stroke="#256a92" stroke-width="2.4"/>
    <ellipse cx="970.7" cy="977" rx="212.8" ry="203.5" fill="none" stroke="#36597a" stroke-width="2.4"/>
    <!-- base -->
    <ellipse cx="972.700" cy="1105.500" rx="116.400" ry="61.800" fill="none" stroke="#444c68" stroke-width="1.400"/>
    <!-- neck glass -->
    <path d="M866.500 490 L880 806 A95 33 0 0 0 1072 806 L1077.500 490Z" fill="url(#neckg)" fill-opacity="0.60" clip-path="url(#notjunc)"/>
    <!-- liquid body -->
    <path d="M878.200 629 L883 804 A92 33 0 0 0 1065.300 804 L1069.600 629Z" fill="#5a3f58" fill-opacity="0.50" clip-path="url(#notjunc)"/>
    <ellipse cx="975" cy="804" rx="92" ry="33" fill="#48576d" fill-opacity="0.75"/>
    <!-- liquid top -->
    <ellipse cx="973.900" cy="628.800" rx="95.700" ry="26.200" fill="url(#liqtop)" stroke="#2f6f95" stroke-width="2"/>
    <!-- junction -->
    <path d="M883 804 A92 33 0 0 0 1067 804" fill="none" stroke="#a38e9b" stroke-width="4"/>
    <path d="M885 803 A90 31 0 0 0 1065 803" fill="none" stroke="#3b7aa0" stroke-width="1.500"/>
    <path d="M882 806 A93 34 0 0 1 1068 806" fill="none" stroke="#3a4768" stroke-width="4"/>
    <!-- neck edges -->
    <path d="M867.500 500 L880 806 M1076.800 500 L1072 806" fill="none" stroke="#2f5c80" stroke-width="2.500"/>
    <path d="M872.500 520 L878.200 629 L883 804 M1071.500 520 L1069.600 629 L1065.300 804" fill="none" stroke="#3a7ea3" stroke-width="1.600"/>
    <!-- rim -->
    <path d="M829 477.200 V491.800 A143.200 34.300 0 0 0 1115.400 491.800 V477.200Z" fill="#a6c6d0" stroke="#36597a" stroke-width="2.600"/>
    <ellipse cx="972.200" cy="477.100" rx="143.200" ry="34.300" fill="#9bd4ea" stroke="#36597a" stroke-width="2.400"/>
    <!-- inner zone slightly greyer (overlap of both faces) -->
    <path d="M831 486 A143.200 34.300 0 0 1 1113.400 486 A143.200 34.300 0 0 1 972 511.400 A143.200 34.300 0 0 1 831 486Z" fill="#a9c9d6" fill-opacity="0.55"/>
    <path d="M831 487 A143.200 34.300 0 0 1 1113.400 487" fill="none" stroke="#2f6c90" stroke-width="1.500"/>
    <path d="M832 482 A143.200 34.300 0 0 0 1112.400 482" fill="none" stroke="#3d7a9c" stroke-width="1.300" transform="translate(0 0)"/>
    <!-- thick bottom edge between neck walls -->
    <path d="M868 515.300 A143.200 34.300 0 0 0 1076.500 515.300" fill="none" stroke="#35587a" stroke-width="3.400"/>
    <!-- neck top seen through rim -->
    <path d="M868 501 A104.100 19 0 0 1 905 488 M1040 488 A104.100 19 0 0 1 1076.200 501" fill="none" stroke="#2f6c90" stroke-width="1.500"/>
    <path d="M868 499 V516 M1076.300 499 V516" stroke="#2f5f84" stroke-width="2.600"/>
    <!-- funnel -->
    <ellipse cx="969" cy="473" rx="70" ry="9" fill="#a9c4d0" fill-opacity="0.8"/>
    <ellipse cx="968.600" cy="476.500" rx="52" ry="4.200" fill="#4b6d8c" fill-opacity="0.85"/>
    <ellipse cx="969" cy="480.500" rx="40" ry="2.600" fill="#a9c0cc"/>
    <path d="M903.300 481.200 A68.500 21.800 0 0 0 1040.300 481.200 Q972 497 903.300 481.200Z" fill="#5ab2dc" fill-opacity="0.85" stroke="#2d80b2" stroke-width="1.800"/>
    <ellipse cx="969.300" cy="491.800" rx="58" ry="6.600" fill="#a6daef" stroke="#3a9acb" stroke-width="1.200"/>
    <path d="M935 497 L995 488 L1012 492 Q975 500 935 497Z" fill="#e4f4fb" fill-opacity="0.85"/>
    <path d="M998 488.500 L1012 492 L1022 490Z" fill="#4aa9da"/>
    <path d="M886.500 469.500 Q889 472 892 472.500 Q930 484.500 972 484.800 Q1014 484.500 1050 472.500 Q1053.500 471.800 1055.500 469.500" fill="none" stroke="#3a5878" stroke-width="2.400"/>
    <path d="M892 472.500 Q900 476 903.300 481.200 M1050 472.500 Q1043 476 1040.300 481.200" fill="none" stroke="#2d80b2" stroke-width="2"/>
  </g>

</svg>
<!--WPTEXT_HTML-->
<div class="abs" style="left:0;top:319px;width:2008px;height:1281px;overflow:hidden;pointer-events:none">
  <div id="wptext" style="position:absolute;left:0;top:0;width:900px;text-align:right;transform-origin:0 0;transform:matrix3d(1.1798901,-0.18397504,0,0.0011676415, 2.0295027,0.00075181584,0,-3.8821057e-06, 0,0,1,0, 2676.6158,1765.9653,0,1);font-size:125px;line-height:125px;white-space:nowrap;color:#5db4da;opacity:0.5;font-family:'Liberation Sans',sans-serif;-webkit-text-stroke:1.5px #5db4da;letter-spacing:8px">Workplane</div>
</div>
<!-- view cube -->
<svg width="160" height="170" style="left:50px;top:370px" viewBox="50 370 160 170">
  <defs>
    <linearGradient id="cubef" x1="0" y1="0" x2="0" y2="1"><stop offset="0" stop-color="#fcfcfc"/><stop offset="1" stop-color="#e6e6e7"/></linearGradient>
    <linearGradient id="cubet" x1="0" y1="0" x2="0" y2="1"><stop offset="0" stop-color="#ffffff"/><stop offset="1" stop-color="#f3f3f3"/></linearGradient>
  </defs>
  <path d="M72 521.500 H181 V528.500 H72Z" fill="#c6c6c8"/>
  <path d="M76.700 379 H176.400 L191 416.600 H60.600Z" fill="url(#cubet)" stroke="#c4c5c8" stroke-width="2.200" stroke-linejoin="round"/>
  <path d="M60.600 416.600 H191 L183.700 521.600 H69.400Z" fill="url(#cubef)" stroke="#c4c5c8" stroke-width="2.200" stroke-linejoin="round"/>
  <text x="126" y="483" font-family="Liberation Sans, sans-serif" font-weight="bold" font-size="27" fill="#adb0b9" stroke="#adb0b9" stroke-width="0.9" text-anchor="middle" textLength="55" lengthAdjust="spacingAndGlyphs">LEFT</text>
  <g transform="translate(127 397) scale(1.25 0.36)" >
    <text x="0" y="7" font-family="Liberation Sans, sans-serif" font-weight="bold" font-size="20" fill="#b9bcc3" text-anchor="middle" transform="rotate(90)">TOP</text>
  </g>
</svg>
<!-- nav buttons -->
<div class="navc" style="top:536px"></div>
<div class="navc" style="top:620px"></div>
<div class="navc" style="top:704px"></div>
<div class="navc" style="top:788px"></div>
<div class="navc" style="top:872px"></div>
<svg width="84" height="420" style="left:0;top:530px" viewBox="0 530 84 420" fill="none" stroke="#b5b5b7" stroke-linecap="round" stroke-linejoin="round">
  <path d="M27 571 L42 556 L57 571 M32 568 V584 H38 V574.500 H46 V584 H52 V568" stroke-width="2.200"/>
  <path d="M27.500 646.500 V640.500 H36 M48 640.500 H56.500 V646.500 M56.500 661.500 V667.500 H48 M36 667.500 H27.500 V661.500" stroke-width="2.200" stroke-linecap="butt" stroke-linejoin="miter"/>
  <path d="M42 726 V750 M30 738 H54" stroke-width="3.600"/>
  <path d="M28.500 822 H55.500" stroke-width="3.600"/>
  <path d="M42 891 L52 896 V909.500 L42 921.500 L32 909.500 V896Z M32 896 L42 901.500 L52 896 M42 901.500 V921.500 M23.500 908 L42 921.500 L60 908" stroke-width="2.200"/>
</svg>
<!-- edit grid / snap grid -->
<div class="abs" style="left:1809px;top:1471px;width:178px;height:41px;border:2px solid #e9ecf0;border-radius:6px;background:rgba(255,255,255,0.82)"></div>
<div class="t" id="editgrid" style="left:1850.1px;top:1477px;font-size:24px;line-height:30px;color:#5b6b80;letter-spacing:0.37px">Edit Grid</div>
<div class="t" id="snapgrid" style="left:1721.2px;top:1540px;font-size:24px;line-height:30px;color:#33475f;letter-spacing:0.25px">Snap Grid</div>
<div class="abs" style="left:1845px;top:1535px;width:142px;height:42px;border:2px solid #e4e8ec;border-radius:5px;background:rgba(255,255,255,0.85)"></div>
<div class="t" id="snapval" style="left:1860.8px;top:1544px;font-size:24px;line-height:30px;color:#5b6b80;letter-spacing:0.18px">1.0 mm</div>
<svg width="16" height="10" style="left:1953px;top:1549px" viewBox="0 0 16 10"><path d="M1 9 L8 1.500 L15 9Z" fill="#22303f"/></svg>
<!-- right panel -->
<div class="abs" id="panel"></div>
<div class="abs" style="left:2008px;top:477px;width:552px;height:2px;background:#dfe4ea"></div>
<div class="abs" style="left:2019px;top:490px;width:531px;height:124px;border:2px solid #e0e4ea;border-radius:7px;background:#f4f5f7;box-shadow:0 3px 6px rgba(150,160,180,0.33)"></div>
<div class="t" id="p-tk" style="left:2040px;top:513px;font-size:23px;line-height:26px;color:#33475f;letter-spacing:-0.14px">Tinkercad</div>
<div class="t" id="p-bs" style="left:2040.8px;top:553px;font-size:31.5px;line-height:38px;color:#33475f;letter-spacing:-0.85px">Basic Shapes</div>
<svg width="22" height="12" style="left:2492px;top:549px" viewBox="0 0 22 12"><path d="M1.500 1.500 H20.500 L11 11Z" fill="#0d0d0d" stroke="#0d0d0d" stroke-width="1.500" stroke-linejoin="round"/></svg>
<div class="abs" style="left:2018px;top:636px;width:531px;height:2px;background:#dce2e8"></div>
<div class="abs" style="left:2534px;top:639px;width:15px;height:275px;border-radius:8px;background:#b9b9ba"></div>
<!-- collapse handle -->
<div class="abs" style="left:1988px;top:913px;width:32px;height:94px;background:#f3f4f7;border:2px solid #dde2e9;border-right:none"></div>
<svg width="30" height="60" style="left:1990px;top:930px" viewBox="1990 930 30 60"><path d="M2000.700 938.600 L2011.400 960.800 L2000.700 981.200" fill="none" stroke="#0a0a0a" stroke-width="4.200" stroke-linejoin="miter" stroke-linecap="round"/></svg>
<svg width="552" height="1281" style="left:2008px;top:319px;overflow:hidden" viewBox="2008 319 552 1281">
  <defs>
    <radialGradient id="halo"><stop offset="0" stop-color="#000" stop-opacity="0.07"/><stop offset="0.55" stop-color="#000" stop-opacity="0.04"/><stop offset="1" stop-color="#000" stop-opacity="0"/></radialGradient>
    <pattern id="st-top" width="20" height="20" patternUnits="userSpaceOnUse" patternTransform="rotate(38)"><rect width="20" height="20" fill="#ced6e3"/><rect width="20" height="10" fill="#b4bcc9"/></pattern>
    <pattern id="st-front" width="20" height="20" patternUnits="userSpaceOnUse" patternTransform="rotate(38)"><rect width="20" height="20" fill="#afb7c5"/><rect width="20" height="10" fill="#9ca4b1"/></pattern>
    <pattern id="st-right" width="20" height="20" patternUnits="userSpaceOnUse" patternTransform="rotate(38)"><rect width="20" height="20" fill="#c7d0de"/><rect width="20" height="10" fill="#aeb6c4"/></pattern>
    <linearGradient id="cylshade" x1="0" x2="1" y1="0" y2="0"><stop offset="0" stop-color="#3a4150" stop-opacity="0.42"/><stop offset="0.3" stop-color="#4a5262" stop-opacity="0.22"/><stop offset="0.6" stop-color="#ffffff" stop-opacity="0.05"/><stop offset="0.85" stop-color="#ffffff" stop-opacity="0.12"/><stop offset="1" stop-color="#6a7282" stop-opacity="0.12"/></linearGradient>
    <linearGradient id="ocyl" x1="0" x2="1" y1="0" y2="0"><stop offset="0" stop-color="#7a4218"/><stop offset="0.25" stop-color="#a85a20"/><stop offset="0.6" stop-color="#cb6c26"/><stop offset="0.85" stop-color="#da782c"/><stop offset="1" stop-color="#cf7029"/></linearGradient>
    <radialGradient id="sphb" cx="0.64" cy="0.34" r="0.75"><stop offset="0" stop-color="#1ea8de"/><stop offset="0.45" stop-color="#1a9bd0"/><stop offset="0.8" stop-color="#1482b2"/><stop offset="1" stop-color="#0f6e98"/></radialGradient>
  </defs>
  <!-- halos -->
  <g>
    <ellipse cx="2164" cy="765" rx="105" ry="112" fill="url(#halo)"/>
    <ellipse cx="2405" cy="765" rx="100" ry="112" fill="url(#halo)"/>
    <ellipse cx="2164" cy="1045" rx="105" ry="112" fill="url(#halo)"/>
    <ellipse cx="2405" cy="1045" rx="100" ry="112" fill="url(#halo)"/>
    <ellipse cx="2166" cy="1322" rx="98" ry="104" fill="url(#halo)"/>
    <ellipse cx="2403" cy="1335" rx="98" ry="104" fill="url(#halo)"/>
    <ellipse cx="2180" cy="1610" rx="105" ry="112" fill="url(#halo)"/>
    <ellipse cx="2406" cy="1610" rx="100" ry="112" fill="url(#halo)"/>
  </g>
  <!-- workplane icon -->
  <g stroke="#1d8cc4" fill="none" stroke-linejoin="miter">
    <path d="M2119.6 351.8 L2185.100 346.900 L2184.700 417.300 L2122.700 411.800Z" stroke-width="3.200"/>
    <path d="M2130.400 351 L2133 412.700 M2141.300 350.200 L2143.300 413.600 M2163.100 348.500 L2164 415.500 M2174 347.700 L2174.400 416.400 M2120.100 361.800 L2185 358.600 M2120.600 371.800 L2185 370.400 M2121.700 391.800 L2184.800 393.800 M2122.200 401.800 L2184.800 405.600" stroke-width="1.300"/>
    <path d="M2152.200 349.400 L2153.600 414.500 M2121.100 381.800 L2184.900 382.100" stroke-width="2"/>
  </g>
  <!-- ruler icon -->
  <g stroke="#1d8cc4" fill="none" stroke-linejoin="miter">
    <path d="M2380.400 352.200 L2396.900 351.500 L2399.600 397.300 L2448.700 399.100 L2447.600 418.400 L2385.100 412.700Z" stroke-width="3.200"/>
    <path d="M2390.500 363.600 H2396 M2388.500 374.500 H2396 M2390.500 385.500 H2396.500 M2390.500 397.500 H2399 M2399.200 398 V406.400 M2409 400 V404.500 M2422 400 V408.200 M2434.200 401 V405.500" stroke-width="1.700"/>
  </g>
  <!-- BOX hole -->
  <g id="boxhole" stroke="#7d848f" stroke-width="1.800" stroke-linejoin="round">
    <path d="M2133.200 680 L2234.900 695.200 L2206.400 748.400 L2088.500 730.300Z" fill="url(#st-top)"/>
    <path d="M2088.500 730.300 L2206.400 748.400 L2202.600 847.200 L2096.100 824.400Z" fill="url(#st-front)"/>
    <path d="M2206.400 748.400 L2234.900 695.200 L2229.200 783.600 L2202.600 847.200Z" fill="url(#st-right)"/>
  </g>
  <!-- CYL hole -->
  <g id="cylhole">
    <path d="M2348 714.200 V810.200 A58 28.500 0 0 0 2464 810.200 V714.200Z" fill="url(#st-right)"/>
    <path d="M2348 714.200 V810.200 A58 28.500 0 0 0 2464 810.200 V714.200Z" fill="url(#cylshade)"/>
    <path d="M2348 714.200 V810.200 A58 28.500 0 0 0 2464 810.200 V714.200" fill="none" stroke="#7d848f" stroke-width="1.800"/>
    <ellipse cx="2406" cy="714.200" rx="58" ry="28.500" fill="url(#st-top)" stroke="#7d848f" stroke-width="1.800"/>
  </g>
  <!-- BOX red -->
  <g transform="translate(0 280)" stroke="#8c0f20" stroke-width="1.800" stroke-linejoin="round">
    <path d="M2133.200 680 L2234.900 695.200 L2206.400 748.400 L2088.500 730.300Z" fill="#c81a2e"/>
    <path d="M2088.500 730.300 L2206.400 748.400 L2202.600 847.200 L2096.100 824.400Z" fill="#a91728"/>
    <path d="M2206.400 748.400 L2234.900 695.200 L2229.200 783.600 L2202.600 847.200Z" fill="#be1a2c"/>
  </g>
  <!-- CYL orange -->
  <g transform="translate(0 280)">
    <path d="M2348 714.200 V810.200 A58 28.500 0 0 0 2464 810.200 V714.200Z" fill="url(#ocyl)" stroke="#8a4a16" stroke-width="1.800"/>
    <ellipse cx="2406" cy="714.200" rx="58" ry="28.500" fill="#d3722a" stroke="#8a4a16" stroke-width="1.800"/>
  </g>
  <!-- sphere -->
  <circle cx="2166" cy="1319.800" r="56" fill="url(#sphb)" stroke="#0f6a94" stroke-width="1.200"/>
  <!-- scribble -->
  <g stroke-linejoin="round">
    <path d="M2442.2 1300.5C2441.4 1304.5 2441.6 1320.9 2443.2 1327.3C2444.8 1333.7 2449.9 1343.2 2451.8 1338.8C2453.7 1334.5 2455.3 1307.4 2454.7 1301.4C2454.0 1295.5 2450.0 1303.5 2448.0 1303.4C2445.9 1303.2 2443.0 1296.5 2442.2 1300.5Z" fill="#7c9fb9"/>
    <path d="M2349.7 1318.7C2349.0 1325.9 2352.3 1357.5 2354.0 1365.7C2355.7 1373.9 2357.8 1368.1 2359.7 1368.1C2361.7 1368.1 2364.5 1373.6 2365.7 1365.7C2366.9 1357.8 2368.2 1327.8 2366.9 1320.6C2365.6 1313.4 2360.7 1322.9 2357.8 1322.5C2354.9 1322.2 2350.3 1311.5 2349.7 1318.7Z" fill="#86aac6"/>
    <path d="M2367.9 1320.6C2366.5 1325.1 2368.4 1350.3 2369.8 1359.0C2371.2 1367.6 2373.7 1368.9 2376.0 1372.4C2378.3 1375.9 2381.1 1378.3 2383.7 1380.1C2386.3 1381.8 2388.9 1383.4 2391.4 1383.0C2393.9 1382.6 2397.5 1385.8 2398.6 1377.7C2399.6 1369.5 2399.1 1340.8 2397.6 1334.0C2396.1 1327.3 2392.7 1337.2 2389.5 1336.9C2386.2 1336.6 2381.5 1334.8 2377.9 1332.1C2374.4 1329.4 2369.2 1316.1 2367.9 1320.6Z" fill="#7d9fb9"/>
    <path d="M2398.6 1318.7C2397.6 1324.1 2399.6 1343.6 2401.0 1351.3C2402.3 1359.0 2404.2 1360.3 2406.7 1364.7C2409.3 1369.2 2412.8 1374.2 2416.3 1378.2C2419.8 1382.2 2423.8 1385.5 2427.8 1388.7C2431.8 1391.9 2437.2 1395.7 2440.3 1397.3C2443.3 1398.9 2444.4 1398.6 2446.0 1398.3C2447.7 1398.0 2449.2 1403.7 2450.3 1395.4C2451.5 1387.1 2454.4 1356.1 2453.2 1348.4C2452.0 1340.8 2447.7 1351.1 2443.2 1349.4C2438.6 1347.6 2432.0 1343.0 2425.9 1337.9C2419.8 1332.8 2411.3 1321.9 2406.7 1318.7C2402.2 1315.5 2399.5 1313.3 2398.6 1318.7Z" fill="#7393ac"/>
    <path d="M2444.1 1351.3C2442.1 1359.4 2440.9 1389.0 2441.2 1396.9C2441.6 1404.7 2444.5 1398.5 2446.0 1398.3C2447.6 1398.1 2449.2 1403.7 2450.3 1395.4C2451.5 1387.1 2454.3 1355.8 2453.2 1348.4C2452.2 1341.1 2446.1 1343.2 2444.1 1351.3Z" fill="#8db1cc" fill-opacity="0.8"/>
    <path d="M2387.5 1337.9C2385.7 1345.8 2385.9 1374.0 2386.6 1381.5C2387.2 1389.0 2389.4 1383.6 2391.4 1383.0C2393.4 1382.3 2397.5 1385.8 2398.6 1377.7C2399.6 1369.5 2399.4 1340.7 2397.6 1334.0C2395.8 1327.4 2389.4 1330.0 2387.5 1337.9Z" fill="#8db1cc" fill-opacity="0.7"/>
    <path d="M2349.7 1314.9C2350.1 1312.1 2351.0 1306.7 2353.0 1304.3C2355.0 1301.9 2358.6 1300.6 2361.6 1300.5C2364.7 1300.3 2369.0 1301.9 2371.2 1303.4C2373.5 1304.8 2375.9 1308.0 2375.1 1309.1C2374.3 1310.2 2368.2 1308.5 2366.4 1310.1C2364.7 1311.7 2366.0 1316.6 2364.5 1318.7C2363.1 1320.8 2360.1 1322.2 2357.8 1322.5C2355.5 1322.9 2352.0 1321.9 2350.6 1320.6C2349.3 1319.3 2349.3 1317.6 2349.7 1314.9Z" fill="#9dc4e0" stroke="#8ab3d0" stroke-width="0.8"/>
    <path d="M2365.5 1310.1C2365.8 1307.8 2369.8 1309.9 2372.2 1307.2C2374.6 1304.5 2376.7 1297.4 2379.9 1293.8C2383.1 1290.2 2387.5 1286.4 2391.4 1285.6C2395.2 1284.8 2399.8 1286.5 2402.9 1289.0C2405.9 1291.5 2407.4 1296.5 2409.6 1300.5C2411.8 1304.5 2413.7 1308.6 2416.3 1312.9C2418.9 1317.3 2424.0 1328.0 2424.9 1326.4C2425.9 1324.8 2421.9 1309.6 2422.1 1303.4C2422.2 1297.1 2423.8 1293.1 2425.9 1289.0C2428.0 1284.8 2432.0 1279.7 2434.5 1278.4C2437.1 1277.1 2440.8 1279.4 2441.2 1281.3C2441.7 1283.2 2438.4 1285.5 2437.4 1289.9C2436.4 1294.4 2435.3 1302.7 2435.5 1308.2C2435.6 1313.6 2436.8 1318.5 2438.4 1322.5C2440.0 1326.5 2442.7 1328.9 2445.1 1332.1C2447.5 1335.3 2451.6 1339.0 2452.7 1341.7C2453.9 1344.4 2453.4 1347.2 2451.8 1348.4C2450.2 1349.7 2447.5 1351.1 2443.2 1349.4C2438.8 1347.6 2432.0 1343.0 2425.9 1337.9C2419.8 1332.8 2411.5 1324.5 2406.7 1318.7C2401.9 1312.9 2399.4 1307.0 2397.1 1303.4C2394.9 1299.7 2393.5 1294.1 2393.3 1296.6C2393.1 1299.2 2395.5 1312.8 2396.2 1318.7C2396.8 1324.6 2398.2 1329.1 2397.1 1332.1C2396.0 1335.2 2392.7 1336.9 2389.5 1336.9C2386.3 1336.9 2381.1 1334.8 2377.9 1332.1C2374.8 1329.4 2372.4 1324.3 2370.3 1320.6C2368.2 1316.9 2365.2 1312.3 2365.5 1310.1Z" fill="#9dc4e0" stroke="#8ab3d0" stroke-width="0.8"/>
    <path d="M2443.2 1288.0C2444.3 1286.7 2446.9 1285.6 2448.9 1285.6C2450.9 1285.6 2454.3 1286.8 2455.1 1288.0C2455.9 1289.2 2454.0 1290.7 2453.7 1292.8C2453.4 1294.9 2454.2 1298.7 2453.2 1300.5C2452.3 1302.2 2449.6 1303.4 2448.0 1303.4C2446.3 1303.4 2444.1 1302.1 2443.2 1300.5C2442.2 1298.9 2442.2 1295.8 2442.2 1293.8C2442.2 1291.7 2442.0 1289.4 2443.2 1288.0Z" fill="#9dc4e0" stroke="#8ab3d0" stroke-width="0.8"/>
  </g>
  <!-- roof (green) -->
  <path d="M2181.400 1550.700 L2118 1606 H2160 L2182 1556Z" fill="#2f6f30"/>
  <path d="M2181.400 1550.700 L2146 1606 H2240 L2183 1551Z" fill="#4caf50" stroke="#2f7a33" stroke-width="1.200"/>
  <path d="M2181.400 1550.700 L2118 1606" stroke="#2a5f2b" stroke-width="1.500" fill="none"/>
  <!-- cone (purple) -->
  <path d="M2406 1549.500 L2372 1606 H2442Z" fill="#8a3fa4" stroke="#5d2a70" stroke-width="1.200"/>
  <path d="M2406 1549.500 L2372 1606 H2398Z" fill="#6b2e82" fill-opacity="0.7"/>
</svg>

<div class="lbl" id="l-wp" style="left:2094.7px;top:437px;letter-spacing:0.66px">Workplane</div>
<div class="lbl" id="l-ru" style="left:2383.8px;top:437px;letter-spacing:0.44px">Ruler</div>
<div class="lbl" id="l-box1" style="left:2142.2px;top:864px;letter-spacing:1.47px">Box</div>
<div class="lbl" id="l-cyl1" style="left:2353.8px;top:864px;letter-spacing:1.62px">Cylinder</div>
<div class="lbl" id="l-box2" style="left:2142.2px;top:1144px;letter-spacing:1.47px">Box</div>
<div class="lbl" id="l-cyl2" style="left:2353.8px;top:1144px;letter-spacing:1.62px">Cylinder</div>
<div class="lbl" id="l-sph" style="left:2120.2px;top:1424px;letter-spacing:1.88px">Sphere</div>
<div class="lbl" id="l-scr" style="left:2353.6px;top:1424px;letter-spacing:1.77px">Scribble</div>

</body>
</html>
